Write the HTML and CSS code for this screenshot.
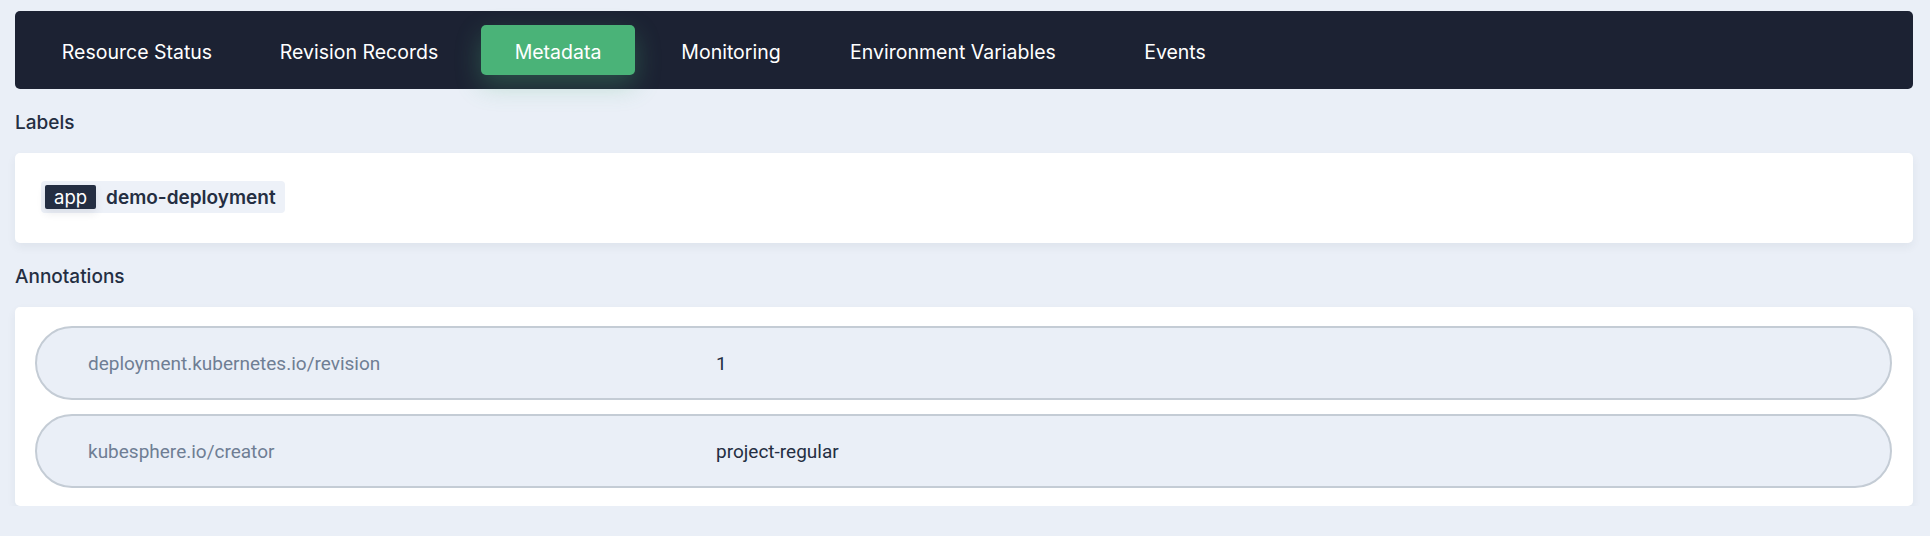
FILE: index.html
```html
<!DOCTYPE html>
<html lang="en">
<head>
<meta charset="utf-8">
<title>Metadata</title>
<link rel="stylesheet" href="styles.css">
</head>
<body>
<div class="page">
  <nav class="tabs">
    <a class="tab tab-1">Resource Status</a>
    <a class="tab tab-2">Revision Records</a>
    <a class="tab tab-3 active">Metadata</a>
    <a class="tab tab-4">Monitoring</a>
    <a class="tab tab-5">Environment Variables</a>
    <a class="tab tab-6">Events</a>
  </nav>

  <h2 class="section-title">Labels</h2>
  <div class="card labels-card">
    <span class="label-tag"><span class="label-key">app</span><span class="label-value">demo-deployment</span></span>
  </div>

  <h2 class="section-title">Annotations</h2>
  <div class="card annotations-card">
    <div class="anno-row">
      <span class="anno-key">deployment.kubernetes.io/revision</span>
      <span class="anno-value">1</span>
    </div>
    <div class="anno-row">
      <span class="anno-key">kubesphere.io/creator</span>
      <span class="anno-value">project-regular</span>
    </div>
  </div>
</div>
</body>
</html>
```

FILE: styles.css
```css
* { box-sizing: border-box; }

html, body {
  margin: 0;
  background: #eaeff7;
}

body {
  font-family: Inter, "Noto Sans", "Liberation Sans", sans-serif;
  color: #242e42;
}

.page {
  padding: 11px 17px 0 15px;
}

.tabs {
  display: flex;
  align-items: center;
  height: 78px;
  padding: 0 0 0 11px;
  background: #1c2233;
  border-radius: 5px;
}

.tab {
  display: flex;
  align-items: center;
  justify-content: center;
  height: 50px;
  padding-top: 4px;
  font-size: 19.5px;
  color: #ffffff;
  border-radius: 5px;
  white-space: nowrap;
}

.tab-1 { width: 222px; }
.tab-2 { width: 222px; }
.tab-3 { width: 154px; margin-left: 11px; }
.tab-4 { width: 190px; margin-left: 1px; }
.tab-5 { width: 254px; }
.tab-6 { width: 190px; }

.tab.active {
  background: #4ab378;
  box-shadow: 0 10px 26px rgba(74, 179, 120, 0.32);
}

.section-title {
  margin: 0;
  padding: 22px 0 18px;
  font-size: 19px;
  line-height: 24px;
  font-weight: 500;
  color: #242e42;
}

.card {
  background: #ffffff;
  border-radius: 5px;
  box-shadow: 0 4px 10px rgba(36, 46, 66, 0.06);
}

.labels-card {
  padding: 28px 26px 30px;
}

.label-tag {
  display: inline-flex;
  align-items: center;
  gap: 10px;
  height: 32px;
  padding: 4px 9px 4px 4px;
  background: #edf1f8;
  border-radius: 4px;
}

.label-key {
  display: inline-flex;
  align-items: center;
  height: 24px;
  padding: 0 9px;
  background: #242e42;
  color: #ffffff;
  border-radius: 2px;
  font-size: 18.5px;
  box-shadow: 0 4px 8px rgba(36, 46, 66, 0.1);
}

.label-value {
  font-size: 19px;
  font-weight: 600;
  color: #242e42;
}

.annotations-card {
  display: flex;
  flex-direction: column;
  gap: 14px;
  padding: 19px 21px 18px 20px;
}

.anno-row {
  display: grid;
  grid-template-columns: 628px 1fr;
  align-items: center;
  height: 74px;
  padding-left: 51px;
  background: #eaeff7;
  border: 2px solid #c4ccd5;
  border-radius: 37px;
  font-family: Roboto, "Liberation Sans", sans-serif;
  font-size: 19px;
}

.anno-key {
  color: #6f7e94;
}

.anno-value {
  color: #242e42;
}
```
